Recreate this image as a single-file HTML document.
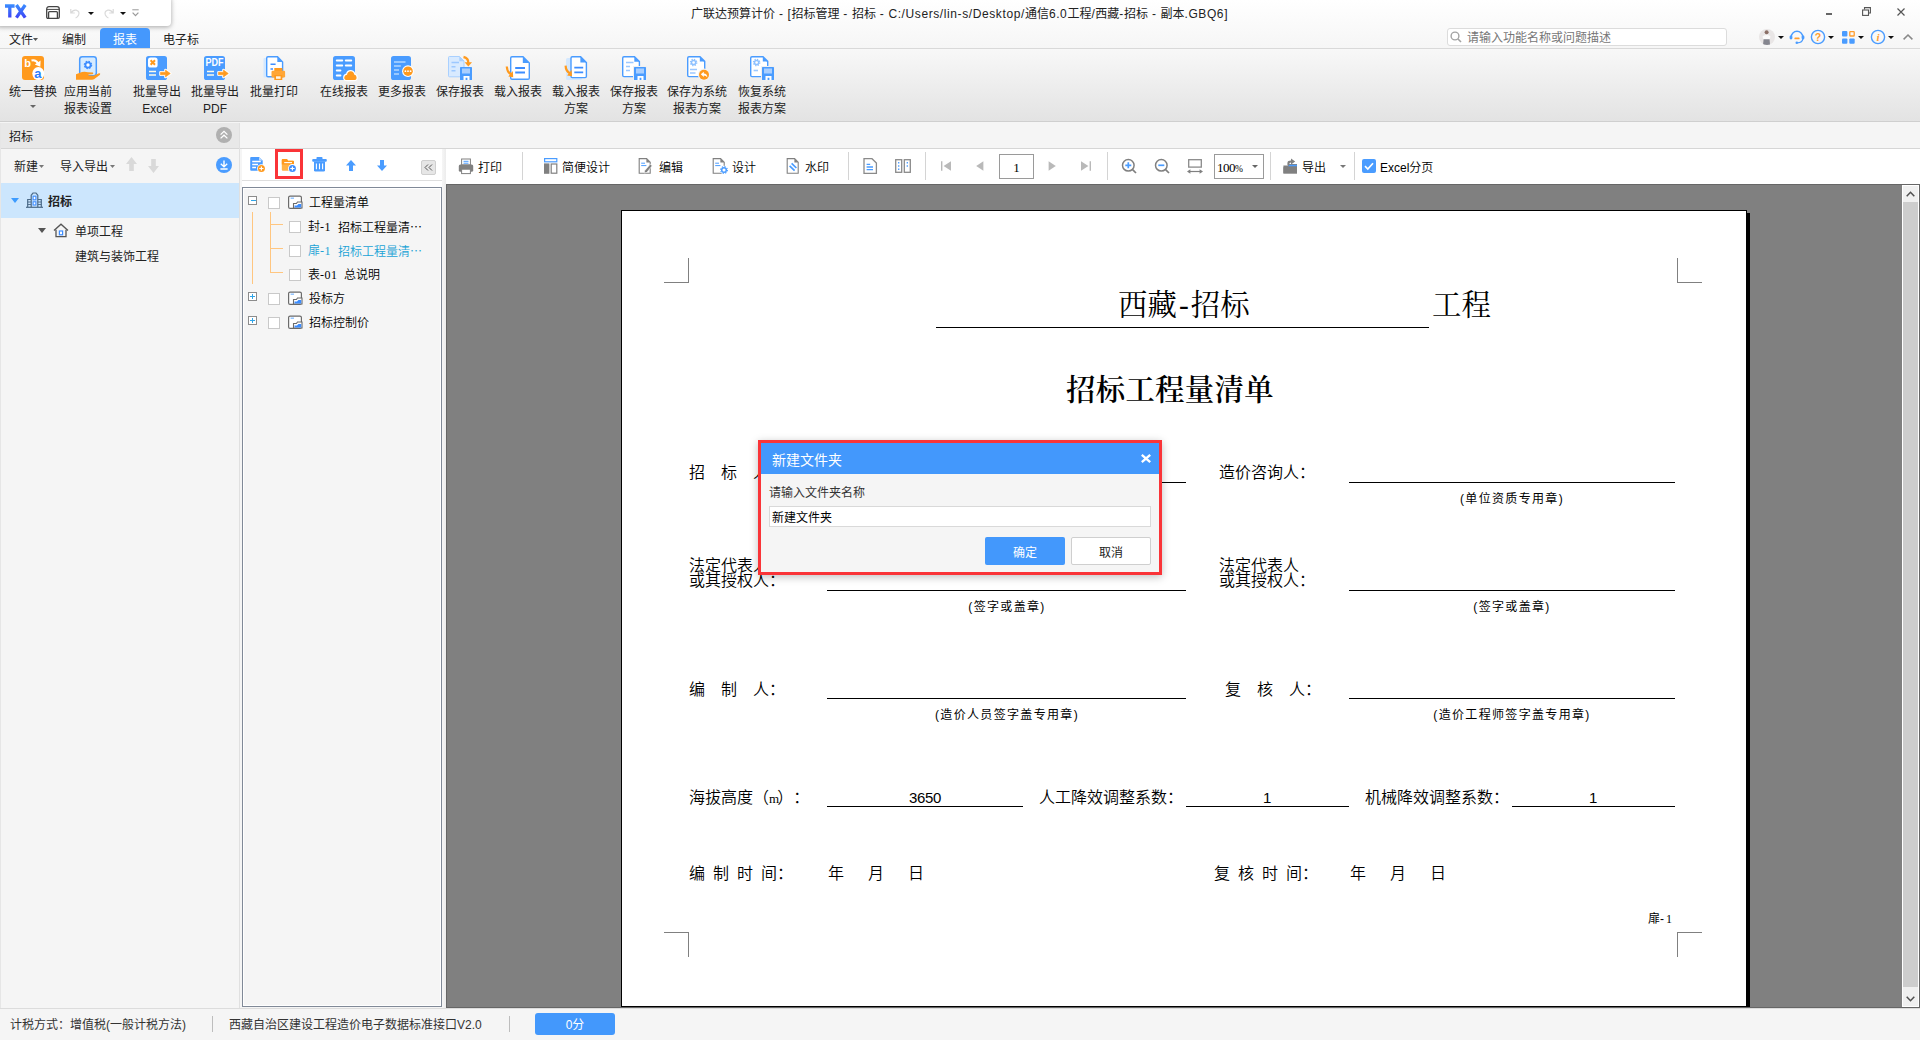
<!DOCTYPE html>
<html lang="zh-CN">
<head>
<meta charset="utf-8">
<title>广联达预算计价</title>
<style>
*{box-sizing:border-box;margin:0;padding:0}
html,body{width:1920px;height:1040px;overflow:hidden;background:#f5f5f5}
body{font-family:"Liberation Sans","Noto Sans CJK SC",sans-serif;font-size:12px;color:#222;position:relative}
.abs{position:absolute}
.t{position:absolute;white-space:nowrap;line-height:18px;height:18px}
svg{position:absolute;overflow:visible}
/* title */
#title{left:0;top:0;width:1920px;height:48px;background:linear-gradient(#ffffff,#f6f6f6)}
#qa{left:-4px;top:-4px;width:175px;height:30px;background:#fff;border-radius:4px;box-shadow:0 1px 5px rgba(0,0,0,.35)}
#tab{left:100px;top:28px;width:50px;height:21px;background:#4598fd;border-radius:4px 4px 0 0}
#ribbon{left:0;top:48px;width:1920px;height:74px;background:linear-gradient(#f8f8f8,#e3e3e3);border-top:1px solid #d9d9d9;border-bottom:1px solid #cfcfcf}
.rb{position:absolute;top:84px;text-align:center;line-height:17px;white-space:nowrap;transform:translateX(-50%)}
/* left panel */
#lhead{left:1px;top:123px;width:238px;height:26px;background:#e8e8e8;border-bottom:1px solid #d6d6d6}
#lpanel{left:0;top:123px;width:240px;height:885px;background:#f5f5f5;border-right:1px solid #e0e0e0;border-left:1px solid #e6e6e6}
#lsel{left:1px;top:183px;width:238px;height:35px;background:#cce6fd}
/* toolbars */
#tb2{left:242px;top:149px;width:200px;height:39px;background:#fff}
#tb3{left:446px;top:149px;width:1474px;height:36px;background:#fff}
#tree{left:242px;top:187px;width:200px;height:820px;background:#f5f5f5;border:1px solid #808997;box-shadow:inset 0 0 0 1px #fff}
#prev{left:446px;top:184px;width:1474px;height:824px;background:#808080;border:1px solid #666}
#page{left:621px;top:210px;width:1126px;height:797px;background:#fff;border:1px solid #000}
#pshadow{left:1747px;top:213px;width:3px;height:794px;background:#000}
#vscroll{left:1902px;top:185px;width:17px;height:822px;background:#cdcdcd;border:1px solid #fff}
#status{left:0;top:1008px;width:1920px;height:32px;background:#f5f5f5;border-top:1px solid #dcdcdc}
.ex{left:248px;width:9px;height:9px;border:1px solid #8c8c8c;background:#fff}
.ex i{position:absolute;background:#2fa4e7}
.cb{width:12px;height:12px;border:1px solid #c9c9c9;background:#fff}
.fi{left:288px}
.tr{color:#000;font-weight:350}
.tb{color:#000;font-weight:350}
.tr .a{font-family:"Liberation Serif",serif;letter-spacing:0.5px}
.l{letter-spacing:0.600px}
.sep{position:absolute;top:152px;width:1px;height:28px;background:#d4d4d4}
.cm{background:#808080}
.doc{position:absolute;white-space:pre;text-spacing-trim:space-all;font-kerning:none;font-family:"Liberation Serif","Noto Serif CJK SC",serif;color:#000}
.dt{font-size:29.400px;line-height:30px;height:30px}
.d16{font-family:"Liberation Serif","Noto Sans CJK SC",sans-serif;font-size:16px;line-height:16px;height:16px;font-weight:350;word-spacing:4px}
.d12{font-family:"Liberation Sans","Noto Sans CJK SC",sans-serif;font-weight:400;font-size:12px;line-height:12px;height:12px;text-align:center;letter-spacing:1.330px}
.dn{font-family:"Liberation Sans",sans-serif;font-size:15px;line-height:16px;text-align:center;letter-spacing:-0.400px}
.ln{position:absolute;height:1px;background:#000}
</style>
</head>
<body>
<div id="title" class="abs"></div>
<div id="qa" class="abs"></div>
<div id="tab" class="abs"></div>
<div id="ribbon" class="abs"></div>
<div id="lpanel" class="abs"></div>
<div id="lhead" class="abs"></div>
<div id="lsel" class="abs"></div>
<div class="abs" style="left:240px;top:148px;width:1680px;height:1px;background:#d6d6d6"></div>
<div class="abs" style="left:442px;top:149px;width:4px;height:859px;background:linear-gradient(90deg,#f6f6f6,#ececec)"></div>
<div id="tb2" class="abs"></div>
<div id="tb3" class="abs"></div>
<div id="tree" class="abs"></div>
<div id="prev" class="abs"></div>
<div id="page" class="abs"></div>
<div id="pshadow" class="abs"></div>
<div id="vscroll" class="abs"></div>
<div id="status" class="abs"></div>
<!--TITLEBAR-->
<!-- title bar -->
<svg style="left:5px;top:4px" width="22" height="14" viewBox="0 0 22 14"><defs><linearGradient id="gtx" x1="0" y1="0" x2="0" y2="1"><stop offset="0" stop-color="#3a8bff"/><stop offset="1" stop-color="#3d45f6"/></linearGradient></defs><path d="M0 2h9.600M4.800 1V13.600M11.400 1l8.800 12.600M20.200 1L11.400 13.600" stroke="url(#gtx)" stroke-width="3.3" fill="none" stroke-linecap="butt"/></svg>
<svg style="left:46px;top:6px" width="14" height="13" viewBox="0 0 14 13"><path d="M0.7 3.2Q0.7 0.7 3 0.7H11Q13.3 0.7 13.3 3.2V11Q13.3 12.3 12 12.3H2Q0.7 12.3 0.7 11Z" fill="none" stroke="#444" stroke-width="1.3"/><path d="M2.6 12V6.6Q2.6 5.6 3.6 5.6H10.4Q11.4 5.6 11.4 6.6V12" fill="none" stroke="#444" stroke-width="1.3"/><path d="M1 3.4H13" stroke="#444" stroke-width="1"/></svg>
<svg style="left:70px;top:8px" width="11" height="11" viewBox="0 0 11 11"><path d="M0.8 1v4h4M1.2 5Q3 1.4 6.4 2.2Q10 3.4 8.6 7Q7.6 9.2 5.6 10" fill="none" stroke="#d9d9d9" stroke-width="1.2"/></svg>
<svg style="left:88px;top:12px" width="6" height="3" viewBox="0 0 6 3"><path d="M0 0h6L3 3z" fill="#111"/></svg>
<svg style="left:103px;top:8px" width="11" height="11" viewBox="0 0 11 11"><path d="M10.2 1v4h-4M9.8 5Q8 1.4 4.600 2.200Q1 3.400 2.400 7Q3.400 9.200 5.400 10" fill="none" stroke="#d9d9d9" stroke-width="1.2"/></svg>
<svg style="left:120px;top:12px" width="6" height="3" viewBox="0 0 6 3"><path d="M0 0h6L3 3z" fill="#111"/></svg>
<svg style="left:132px;top:9px" width="7" height="8" viewBox="0 0 7 8"><path d="M0.3 0.8h6.400" stroke="#999" stroke-width="1"/><path d="M0.6 3.600L3.500 6.600L6.400 3.600" fill="none" stroke="#999" stroke-width="1.2"/></svg>
<div class="t" style="left:691px;top:5px;color:#222">广联达预算计价<span class="l"> - [</span>招标管理<span class="l"> - </span>招标<span class="l"> - C:/Users/lin-s/Desktop/</span>通信<span class="l">6.0</span>工程<span class="l">/</span>西藏<span class="l">-</span>招标<span class="l"> - </span>副本<span class="l">.GBQ6]</span></div>
<div class="abs" style="left:1826px;top:13px;width:6px;height:2px;background:#666"></div>
<svg style="left:1862px;top:7px" width="9" height="9" viewBox="0 0 9 9"><path d="M2.500 2.500V0.600H8.400V6H6.500" fill="none" stroke="#555" stroke-width="1.1"/><rect x="0.600" y="3" width="5.900" height="5.400" fill="none" stroke="#555" stroke-width="1.100"/></svg>
<svg style="left:1897px;top:8px" width="8" height="8" viewBox="0 0 8 8"><path d="M0.500 0.500L7.500 7.500M7.500 0.500L0.500 7.500" stroke="#555" stroke-width="1.200"/></svg>
<!-- menu -->
<div class="t" style="left:9px;top:31px">文件</div>
<svg style="left:33px;top:38px" width="5" height="3" viewBox="0 0 5 3"><path d="M0 0h5L2.500 3z" fill="#555"/></svg>
<div class="t" style="left:62px;top:31px">编制</div>
<div class="t" style="left:113px;top:31px;color:#fff">报表</div>
<div class="t" style="left:163px;top:31px">电子标</div>
<!-- search -->
<div class="abs" style="left:1447px;top:28px;width:280px;height:18px;background:#fff;border:1px solid #dcdcdc;border-radius:3px"></div>
<svg style="left:1450px;top:31px" width="12" height="12" viewBox="0 0 12 12"><circle cx="5" cy="5" r="3.900" fill="none" stroke="#a3a3a3" stroke-width="1.400"/><path d="M8 8L11 11" stroke="#a3a3a3" stroke-width="1.600"/></svg>
<div class="t" style="left:1467px;top:29px;color:#777">请输入功能名称或问题描述</div>
<!-- right icons -->
<svg style="left:1759px;top:29px" width="16" height="16" viewBox="0 0 16 16"><defs><clipPath id="cav"><circle cx="8" cy="8" r="8"/></clipPath></defs><circle cx="8" cy="8" r="8" fill="#e9e6e6"/><g clip-path="url(#cav)"><circle cx="7.600" cy="3.200" r="2" fill="#8b6f66"/><path d="M3.500 7.500Q7.600 4.600 11.500 7.500L10.500 10.500H4.500z" fill="#fbfbfb"/><path d="M4.600 10.200H10.600L11 16H4z" fill="#85868f"/></g></svg>
<svg style="left:1778px;top:36px" width="6" height="3" viewBox="0 0 6 3"><path d="M0 0h6L3 3z" fill="#111"/></svg>
<svg style="left:1789px;top:29px" width="16" height="16" viewBox="0 0 16 16"><path d="M2.200 8A5.800 5.800 0 0 1 13.800 8" fill="none" stroke="#4a9cff" stroke-width="1.400"/><rect x="0.600" y="6.400" width="2.800" height="4" rx="1.300" fill="#4a9cff"/><rect x="12.600" y="6.400" width="2.800" height="4" rx="1.300" fill="#4a9cff"/><path d="M13.800 10Q13.400 13.600 8.600 13.800" fill="none" stroke="#4a9cff" stroke-width="1.300"/><circle cx="7.800" cy="13.800" r="1.300" fill="#4a9cff"/><path d="M6.200 9.400H9.800" stroke="#ff9d2e" stroke-width="1.700" stroke-linecap="round"/></svg>
<svg style="left:1810px;top:29px" width="16" height="16" viewBox="0 0 16 16"><circle cx="8" cy="8" r="6.600" fill="none" stroke="#4a9cff" stroke-width="1.400"/><text x="8" y="12" font-family="Liberation Sans,sans-serif" font-weight="bold" font-size="10.500" fill="#ff9d2e" text-anchor="middle">?</text></svg>
<svg style="left:1828px;top:36px" width="6" height="3" viewBox="0 0 6 3"><path d="M0 0h6L3 3z" fill="#111"/></svg>
<svg style="left:1842px;top:31px" width="13" height="13" viewBox="0 0 13 13"><rect x="0" y="0" width="5.400" height="5.400" rx="1" fill="#4a9cff"/><rect x="7.800" y="0.600" width="4.400" height="4.400" rx="0.600" fill="none" stroke="#ff9d2e" stroke-width="1.300"/><rect x="0" y="7.400" width="5.400" height="5.400" rx="1" fill="#4a9cff"/><rect x="7.300" y="7.400" width="5.400" height="5.400" rx="1" fill="#4a9cff"/></svg>
<svg style="left:1858px;top:36px" width="6" height="3" viewBox="0 0 6 3"><path d="M0 0h6L3 3z" fill="#111"/></svg>
<svg style="left:1870px;top:29px" width="16" height="16" viewBox="0 0 16 16"><circle cx="8" cy="8" r="6.600" fill="none" stroke="#4a9cff" stroke-width="1.400"/><text x="8" y="12" font-family="Liberation Serif,serif" font-weight="bold" font-style="italic" font-size="11" fill="#ff9d2e" text-anchor="middle">i</text></svg>
<svg style="left:1888px;top:36px" width="6" height="3" viewBox="0 0 6 3"><path d="M0 0h6L3 3z" fill="#111"/></svg>
<svg style="left:1903px;top:34px" width="10" height="6" viewBox="0 0 10 6"><path d="M0.600 5.400L5 1L9.400 5.400" fill="none" stroke="#888" stroke-width="1.500"/></svg>
<!--/TITLEBAR-->
<!--RIBBON-->
<!-- ribbon icons -->
<svg style="left:17px;top:52px" width="32" height="32" viewBox="0 0 32 32"><rect x="5" y="4" width="22" height="24" rx="3" fill="#ff9a1e"/><text x="7.300" y="15" font-family="Liberation Sans,sans-serif" font-weight="bold" font-size="11" fill="#fff">b</text><path d="M14.500 8.500Q19 7.500 21 11.500" fill="none" stroke="#fff" stroke-width="2"/><path d="M17.800 12.400L23.600 8.600L23.300 14.800z" fill="#fff"/><ellipse cx="21.300" cy="21.600" rx="6" ry="6.500" fill="#fff"/><text x="17.300" y="26.300" font-family="Liberation Sans,sans-serif" font-weight="bold" font-size="13" fill="#2c7dff">a</text></svg>
<svg style="left:72px;top:52px" width="32" height="32" viewBox="0 0 32 32"><rect x="7.700" y="4.700" width="16.600" height="19" rx="2.600" fill="#d6ebff" stroke="#4a9cff" stroke-width="1.500"/><circle cx="16" cy="13" r="2.600" fill="#fff" stroke="#3d8dff" stroke-width="1.800"/><circle cx="16" cy="13" r="3.600" fill="none" stroke="#3d8dff" stroke-width="1.300" stroke-dasharray="1.500 1.330"/><path d="M4 22.300L10 20Q13 19.300 16 20.300L21 20.600Q21.800 22 20.500 22.300L16.500 22.500V23.400L21.500 23.700L27 21.300Q28.800 21.200 28 22.700L22 27.200Q20 28 17 27.800H4z" fill="#ff9a1e"/></svg>
<svg style="left:141px;top:52px" width="32" height="32" viewBox="0 0 32 32"><rect x="5" y="4" width="21" height="24" rx="2.600" fill="#4a9cff"/><rect x="7" y="5.500" width="9.600" height="10" rx="2.600" fill="#fff"/><path d="M9.600 8.300L14 12.700M14 8.300L9.600 12.700" stroke="#ff9a1e" stroke-width="2"/><path d="M8 19.500H15M8 23H15" stroke="#fffbe8" stroke-width="1.700"/><path d="M19.500 20.200H24.500V18L29.300 21.500L24.500 25V22.800H19.500z" fill="#ff9a1e" stroke="#fff" stroke-width="2.600" stroke-linejoin="round"/><path d="M19.500 20.200H24.500V18L29.300 21.500L24.500 25V22.800H19.500z" fill="#ff9a1e" stroke="#ff9a1e" stroke-width="0.600" stroke-linejoin="round"/></svg>
<svg style="left:199px;top:52px" width="32" height="32" viewBox="0 0 32 32"><rect x="5" y="4" width="21" height="24" rx="2.600" fill="#4a9cff"/><text x="6.400" y="14.300" font-family="Liberation Sans,sans-serif" font-weight="bold" font-size="10" fill="#fff" textLength="18" lengthAdjust="spacingAndGlyphs">PDF</text><path d="M8 19.500H15M8 23H15" stroke="#fffbe8" stroke-width="1.700"/><path d="M19.500 20.200H24.500V18L29.300 21.500L24.500 25V22.800H19.500z" fill="#ff9a1e" stroke="#fff" stroke-width="2.600" stroke-linejoin="round"/><path d="M19.500 20.200H24.500V18L29.300 21.500L24.500 25V22.800H19.500z" fill="#ff9a1e" stroke="#ff9a1e" stroke-width="0.600" stroke-linejoin="round"/></svg>
<svg style="left:258px;top:52px" width="32" height="32" viewBox="0 0 32 32"><rect x="5.500" y="6" width="4" height="19.500" rx="1" fill="#d3e8ff"/><path d="M10 4.700H19.500L24.600 10V24.800H10Q8.700 24.800 8.700 23.500V6Q8.700 4.700 10 4.700z" fill="#fff" stroke="#4a9cff" stroke-width="1.400"/><path d="M19.300 4.700V10H24.600z" fill="#4a9cff"/><path d="M12.500 12.300H17.600M12.500 17H15" stroke="#3d8dff" stroke-width="1.600"/><rect x="16.300" y="16" width="8" height="4" fill="#ff9a1e"/><rect x="13.500" y="18.800" width="13.600" height="6.600" rx="1.200" fill="#ffa636"/><rect x="16.300" y="23" width="8" height="5" fill="#ff9a1e"/><rect x="18" y="24.300" width="4.600" height="2.500" fill="#fff4e3"/></svg>
<svg style="left:328px;top:52px" width="32" height="32" viewBox="0 0 32 32"><rect x="5" y="4" width="22" height="24" rx="2.600" fill="#4a9cff"/><path d="M8.800 8.500H14.200M17.800 8.500H23.200M8.800 13.400H14.200M17.800 13.400H23.200M8.800 18.400H12.400M8.800 23.400H12.400" stroke="#fff" stroke-width="2" stroke-linecap="round"/><path d="M19 28Q16 28 16.300 25.200Q16.600 23 19 22.800Q19.600 19.300 22.800 19.300Q25.800 19.600 26.200 22.600Q28.600 23 28.600 25.400Q28.600 28 26 28z" fill="#ff9a1e" stroke="#fff" stroke-width="2.400"/><path d="M19 28Q16 28 16.300 25.200Q16.600 23 19 22.800Q19.600 19.300 22.800 19.300Q25.800 19.600 26.200 22.600Q28.600 23 28.600 25.400Q28.600 28 26 28z" fill="#ff9a1e"/></svg>
<svg style="left:386px;top:52px" width="32" height="32" viewBox="0 0 32 32"><rect x="5" y="4" width="20" height="24" rx="2.600" fill="#4a9cff"/><path d="M8 10H19.500M8 14H14.800M8 18H13M8 22H13" stroke="#b3d6ff" stroke-width="1.700"/><circle cx="22" cy="19.200" r="5.900" fill="#fff"/><circle cx="22" cy="19.200" r="4.800" fill="#ff9a1e"/><circle cx="19.400" cy="19.200" r="0.900" fill="#fff"/><circle cx="22" cy="19.200" r="0.900" fill="#fff"/><circle cx="24.600" cy="19.200" r="0.900" fill="#fff"/></svg>
<svg style="left:444px;top:52px" width="32" height="32" viewBox="0 0 32 32"><path d="M5.500 4.500H15.500L20 9V24.800H5.500Q4.500 24.800 4.500 23.800V5.500Q4.500 4.500 5.500 4.500z" fill="#d8eaff" stroke="#a9d0ff" stroke-width="1"/><path d="M15.300 4.500V9.200H20z" fill="#a9d0ff"/><path d="M7.500 10.500H15M7.500 14.800H11.500M7.500 18.800H11.500" stroke="#9cc8ff" stroke-width="1.500"/><path d="M19.500 5Q24.500 6 24.300 11" fill="none" stroke="#ff9a1e" stroke-width="2.300"/><path d="M20.600 10.300H28L24.300 14.400z" fill="#ff9a1e"/><rect x="16" y="15" width="12" height="13" rx="0.600" fill="#4a9cff"/><rect x="18" y="16.500" width="8" height="5" fill="#a9cfff"/><path d="M19.500 24H25.500V28H23.400V25.800H21.600V28H19.500z" fill="#fff"/></svg>
<svg style="left:502px;top:52px" width="32" height="32" viewBox="0 0 32 32"><path d="M10 4.700H21L27.300 11V26Q27.300 27.300 26 27.300H10Q8.700 27.300 8.700 26V6Q8.700 4.700 10 4.700z" fill="#fff" stroke="#4a9cff" stroke-width="1.400"/><path d="M20.800 4.700V11H27.300z" fill="#4a9cff"/><path d="M13.200 16H23M13.200 20.500H23" stroke="#3d8dff" stroke-width="1.800"/><path d="M4.800 14.500Q5 20 9 22.300" fill="none" stroke="#ff9a1e" stroke-width="2.200"/><path d="M6.300 24.600L10.800 19L11.200 25.200z" fill="#ff9a1e"/></svg>
<svg style="left:560px;top:52px" width="32" height="32" viewBox="0 0 32 32"><rect x="6" y="6" width="16" height="22" rx="1.600" fill="#d3e8ff"/><path d="M12.300 4.700H20.600L26.400 10.500V24.300Q26.400 25.600 25.100 25.600H12.300Q11 25.600 11 24.300V6Q11 4.700 12.300 4.700z" fill="#fff" stroke="#4a9cff" stroke-width="1.400"/><path d="M20.400 4.700V10.600H26.400z" fill="#4a9cff"/><path d="M14.300 15.600H23.200M14.300 20.400H23.200" stroke="#3d8dff" stroke-width="1.800"/><path d="M5.600 13.600Q5.800 19 9.800 21.300" fill="none" stroke="#ff9a1e" stroke-width="2.200"/><path d="M7.100 23.600L11.600 18L12 24.200z" fill="#ff9a1e"/></svg>
<svg style="left:618px;top:52px" width="32" height="32" viewBox="0 0 32 32"><path d="M6 4.700H16.500L21.400 9.600V23.300Q21.400 24.600 20.100 24.600H6Q4.700 24.600 4.700 23.300V6Q4.700 4.700 6 4.700z" fill="#fff" stroke="#4a9cff" stroke-width="1.400"/><path d="M16.300 4.700V9.800H21.400z" fill="#4a9cff"/><path d="M8 10.500H15.500M8 14.500H12M8 18.500H12" stroke="#9cc8ff" stroke-width="1.500"/><rect x="15" y="14" width="14" height="15" fill="#f0f0f0"/><rect x="16" y="15" width="12" height="13" rx="0.600" fill="#4a9cff"/><rect x="18" y="16.500" width="8" height="5" fill="#a9cfff"/><path d="M19.500 24H25.500V28H23.400V25.800H21.600V28H19.500z" fill="#fff"/></svg>
<svg style="left:681px;top:52px" width="32" height="32" viewBox="0 0 32 32"><path d="M8 4.700H19L23.700 9.400V23.300Q23.700 24.600 22.400 24.600H8Q6.700 24.600 6.700 23.300V6Q6.700 4.700 8 4.700z" fill="#fff" stroke="#4a9cff" stroke-width="1.400"/><path d="M18.800 4.700V9.600H23.700z" fill="#4a9cff"/><circle cx="12.600" cy="10.500" r="2.100" fill="none" stroke="#8ec1ff" stroke-width="1.500"/><circle cx="12.600" cy="10.500" r="3.200" fill="none" stroke="#8ec1ff" stroke-width="1.200" stroke-dasharray="1.300 1.210"/><path d="M9 17.500H16M9 21H14.500" stroke="#9cc8ff" stroke-width="1.500"/><circle cx="23" cy="22.700" r="6.100" fill="#f4f4f4"/><circle cx="23" cy="22.700" r="5" fill="#ff9a1e"/><path d="M19.800 22.300L22.800 19.700V21.400Q26.200 21.600 26.300 25.300Q25 23.400 22.800 23.400V25z" fill="#fff"/></svg>
<svg style="left:746px;top:52px" width="32" height="32" viewBox="0 0 32 32"><path d="M6 4.700H17L21.700 9.400V23.300Q21.700 24.600 20.400 24.600H6Q4.700 24.600 4.700 23.300V6Q4.700 4.700 6 4.700z" fill="#fff" stroke="#4a9cff" stroke-width="1.400"/><path d="M16.800 4.700V9.600H21.700z" fill="#4a9cff"/><circle cx="10.600" cy="10.500" r="2.100" fill="none" stroke="#8ec1ff" stroke-width="1.500"/><circle cx="10.600" cy="10.500" r="3.200" fill="none" stroke="#8ec1ff" stroke-width="1.200" stroke-dasharray="1.300 1.210"/><path d="M7.600 18.500H12" stroke="#9cc8ff" stroke-width="1.600"/><rect x="15" y="14" width="14" height="15" fill="#f0f0f0"/><rect x="16" y="15" width="12" height="13" rx="0.600" fill="#4a9cff"/><rect x="18" y="16.500" width="8" height="5" fill="#a9cfff"/><path d="M19.500 24H25.500V28H23.400V25.800H21.600V28H19.500z" fill="#fff"/></svg>
<!-- ribbon labels -->
<div class="rb" style="left:33px">统一替换</div>
<svg style="left:30px;top:105px" width="6" height="3" viewBox="0 0 6 3"><path d="M0 0h6L3 3z" fill="#666"/></svg>
<div class="rb" style="left:88px">应用当前<br>报表设置</div>
<div class="rb" style="left:157px">批量导出<br>Excel</div>
<div class="rb" style="left:215px">批量导出<br>PDF</div>
<div class="rb" style="left:274px">批量打印</div>
<div class="rb" style="left:344px">在线报表</div>
<div class="rb" style="left:402px">更多报表</div>
<div class="rb" style="left:460px">保存报表</div>
<div class="rb" style="left:518px">载入报表</div>
<div class="rb" style="left:576px">载入报表<br>方案</div>
<div class="rb" style="left:634px">保存报表<br>方案</div>
<div class="rb" style="left:697px">保存为系统<br>报表方案</div>
<div class="rb" style="left:762px">恢复系统<br>报表方案</div>
<!--/RIBBON-->
<!--LEFT-->
<!-- left panel -->
<div class="t" style="left:9px;top:128px">招标</div>
<svg style="left:216px;top:127px" width="16" height="16" viewBox="0 0 16 16"><circle cx="8" cy="8" r="8" fill="#b0b0b0"/><path d="M4.600 7.600L8 4.400L11.400 7.600M4.600 11.400L8 8.200L11.400 11.400" fill="none" stroke="#fff" stroke-width="1.300"/></svg>
<div class="t" style="left:14px;top:158px">新建</div>
<svg style="left:39px;top:165px" width="5" height="3" viewBox="0 0 5 3"><path d="M0 0h5L2.500 3z" fill="#777"/></svg>
<div class="t" style="left:60px;top:158px">导入导出</div>
<svg style="left:110px;top:165px" width="5" height="3" viewBox="0 0 5 3"><path d="M0 0h5L2.500 3z" fill="#777"/></svg>
<svg style="left:126px;top:157px" width="11" height="14" viewBox="0 0 11 14"><path d="M5.500 0L11 7H7.800V14H3.200V7H0z" fill="#d9d9d9"/></svg>
<svg style="left:148px;top:158.500px" width="11" height="14" viewBox="0 0 11 14"><path d="M5.500 14L11 7H7.800V0H3.200V7H0z" fill="#d9d9d9"/></svg>
<svg style="left:216px;top:157px" width="16" height="16" viewBox="0 0 16 16"><circle cx="8" cy="8" r="8" fill="#4a9cff"/><path d="M8 3.600V9.600M4.800 6.800L8 9.900L11.200 6.800M4.400 12H11.600" fill="none" stroke="#fff" stroke-width="1.400"/></svg>
<svg style="left:11px;top:198px" width="8" height="5" viewBox="0 0 8 5"><path d="M0 0h8L4 5z" fill="#3d9cff"/></svg>
<svg style="left:26px;top:192px" width="17" height="16" viewBox="0 0 17 16"><path d="M0 15.300H17" stroke="#4b6a88" stroke-width="1.200"/><path d="M5.200 15V3.200L7 1H10L11.800 3.200V15" fill="none" stroke="#4b6a88" stroke-width="1.200"/><path d="M1.700 15V7.500H5M15.300 15V7.500H12" fill="none" stroke="#4b6a88" stroke-width="1.200"/><path d="M1.700 10H5M1.700 12.500H5M12 10H15.300M12 12.500H15.300" stroke="#4b6a88" stroke-width="0.900"/><rect x="7.100" y="4.200" width="2.800" height="3.600" fill="#fff" stroke="#3d8dff" stroke-width="1.100"/><rect x="7.100" y="9.800" width="2.800" height="3.200" fill="#fff" stroke="#3d8dff" stroke-width="1.100"/></svg>
<div class="t" style="left:48px;top:193px;font-weight:bold">招标</div>
<svg style="left:38px;top:228px" width="8" height="5" viewBox="0 0 8 5"><path d="M0 0h8L4 5z" fill="#555"/></svg>
<svg style="left:53px;top:223px" width="16" height="15" viewBox="0 0 16 15"><path d="M1 7.600L8 1.200L15 7.600" fill="none" stroke="#555" stroke-width="1.300"/><path d="M3 6.800V13.600H13V6.800" fill="none" stroke="#555" stroke-width="1.300"/><rect x="6.400" y="8" width="3.200" height="3.800" fill="#fff" stroke="#3d8dff" stroke-width="1.200"/></svg>
<div class="t" style="left:75px;top:223px">单项工程</div>
<div class="t" style="left:75px;top:248px">建筑与装饰工程</div>
<!--/LEFT-->
<!--MID-->
<!-- middle toolbar -->
<svg style="left:249px;top:156px" width="18" height="17" viewBox="0 0 18 17"><path d="M2.200 1H10L13.700 4.600V13.800Q13.700 14.800 12.700 14.800H2.200Q1.200 14.800 1.200 13.800V2Q1.200 1 2.200 1z" fill="#4a9cff"/><path d="M10 1V4.600H13.700z" fill="#b9d9ff"/><path d="M3.200 5.500H11.800M3.200 8.500H9M3.200 11.500H7" stroke="#fff" stroke-width="1.300"/><circle cx="12.400" cy="12.500" r="4.300" fill="#fff"/><circle cx="12.400" cy="12.500" r="3.500" fill="#ff9a1e"/><path d="M10.300 12.500H14.500M12.400 10.400V14.600" stroke="#fff" stroke-width="1.200"/></svg>
<div class="abs" style="left:275px;top:149px;width:28px;height:30px;border:3px solid #fa3438"></div>
<svg style="left:281px;top:158px" width="16" height="15" viewBox="0 0 16 15"><path d="M1.800 1H6L7 2.800H12Q13 2.800 13 3.800V11.800Q13 12.800 12 12.800H1.800Q0.800 12.800 0.800 11.800V2Q0.800 1 1.800 1z" fill="#ffb247"/><path d="M1.800 1H6L7 2.800H12Q13 2.800 13 3.800V6.400H0.800V2Q0.800 1 1.800 1z" fill="#ff9a1e"/><path d="M3.200 4.600H11" stroke="#fff" stroke-width="1.100"/><circle cx="11.400" cy="10.500" r="4.400" fill="#fff"/><circle cx="11.400" cy="10.500" r="3.500" fill="#3d8dff"/><path d="M9.300 10.500H13.500M11.400 8.400V12.600" stroke="#fff" stroke-width="1.200"/></svg>
<svg style="left:312px;top:157px" width="15" height="15" viewBox="0 0 15 15"><rect x="0.200" y="2" width="14.600" height="2.700" rx="1" fill="#4a9cff"/><rect x="4.500" y="0" width="6" height="3" rx="0.800" fill="#4a9cff"/><path d="M2 4.600H13V13.200Q13 14.600 11.600 14.600H3.400Q2 14.600 2 13.200z" fill="#4a9cff"/><path d="M4.400 6.400V12.200M7.500 6.400V12.200M10.600 6.400V12.200" stroke="#fff" stroke-width="1.100"/></svg>
<svg style="left:346px;top:160px" width="10" height="11" viewBox="0 0 10 11"><path d="M5 0L10 5.600H7V11H3V5.600H0z" fill="#4a9cff"/></svg>
<svg style="left:377px;top:160px" width="10" height="11" viewBox="0 0 10 11"><path d="M5 11L10 5.400H7V0H3V5.400H0z" fill="#4a9cff"/></svg>
<div class="abs" style="left:421px;top:160px;width:15px;height:15px;background:#e6e6e6;border:1px solid #cfcfcf;border-radius:2px"></div>
<svg style="left:424px;top:164px" width="9" height="7" viewBox="0 0 9 7"><path d="M4 0.500L1 3.500L4 6.500M8 0.500L5 3.500L8 6.500" fill="none" stroke="#555" stroke-width="1"/></svg>
<div class="abs" style="left:242px;top:180px;width:200px;height:1px;background:#dedede"></div>
<!-- tree -->
<div class="abs" style="left:252px;top:212px;width:1px;height:72px;background:#ffc680"></div>
<div class="abs" style="left:270px;top:212px;width:1px;height:61px;background:#ffc680"></div>
<div class="abs" style="left:270px;top:224px;width:13px;height:1px;background:#ffc680"></div>
<div class="abs" style="left:270px;top:248px;width:13px;height:1px;background:#ffc680"></div>
<div class="abs" style="left:270px;top:272px;width:13px;height:1px;background:#ffc680"></div>
<div class="abs ex" style="top:196px"><i style="left:2px;top:3px;width:5px;height:1px"></i></div>
<div class="abs ex" style="top:292px"><i style="left:1px;top:3px;width:5px;height:1px"></i><i style="left:3px;top:1px;width:1px;height:5px"></i></div>
<div class="abs ex" style="top:316px"><i style="left:1px;top:3px;width:5px;height:1px"></i><i style="left:3px;top:1px;width:1px;height:5px"></i></div>
<div class="abs cb" style="left:268px;top:197px"></div>
<div class="abs cb" style="left:289px;top:221px"></div>
<div class="abs cb" style="left:289px;top:245px"></div>
<div class="abs cb" style="left:289px;top:269px"></div>
<div class="abs cb" style="left:268px;top:293px"></div>
<div class="abs cb" style="left:268px;top:317px"></div>
<svg class="fi" style="top:195px" width="15" height="14" viewBox="0 0 15 14"><rect x="0.600" y="1.100" width="12.800" height="12.300" rx="1.500" fill="#fff" stroke="#6b6b6b" stroke-width="1.200"/><path d="M2.600 3.200H6" stroke="#8cc0ff" stroke-width="1.400"/><path d="M5.500 13V8.500H8.400L9.500 7H14V13z" fill="#fff" stroke="#6b6b6b" stroke-width="1.100"/><path d="M6.500 12.600V10.600H9L10.400 9H13.200V12.600z" fill="#3d8dff"/></svg>
<svg class="fi" style="top:291px" width="15" height="14" viewBox="0 0 15 14"><rect x="0.600" y="1.100" width="12.800" height="12.300" rx="1.500" fill="#fff" stroke="#6b6b6b" stroke-width="1.200"/><path d="M2.600 3.200H6" stroke="#8cc0ff" stroke-width="1.400"/><path d="M5.500 13V8.500H8.400L9.500 7H14V13z" fill="#fff" stroke="#6b6b6b" stroke-width="1.100"/><path d="M6.500 12.600V10.600H9L10.400 9H13.200V12.600z" fill="#3d8dff"/></svg>
<svg class="fi" style="top:315px" width="15" height="14" viewBox="0 0 15 14"><rect x="0.600" y="1.100" width="12.800" height="12.300" rx="1.500" fill="#fff" stroke="#6b6b6b" stroke-width="1.200"/><path d="M2.600 3.200H6" stroke="#8cc0ff" stroke-width="1.400"/><path d="M5.500 13V8.500H8.400L9.500 7H14V13z" fill="#fff" stroke="#6b6b6b" stroke-width="1.100"/><path d="M6.500 12.600V10.600H9L10.400 9H13.200V12.600z" fill="#3d8dff"/></svg>

<div class="t tr" style="left:309px;top:194px">工程量清单</div>
<div class="t tr" style="left:308px;top:218px">封<span class="a">-1</span></div><div class="t tr" style="left:338px;top:218px">招标工程量清<span style="font-family:'Noto Sans CJK SC',sans-serif">…</span></div>
<div class="t tr" style="left:308px;top:242px;color:#1ba3d6">扉<span class="a">-1</span></div><div class="t tr" style="left:338px;top:242px;color:#1ba3d6">招标工程量清<span style="font-family:'Noto Sans CJK SC',sans-serif">…</span></div>
<div class="t tr" style="left:308px;top:266px">表<span class="a">-01</span></div><div class="t tr" style="left:344px;top:266px">总说明</div>
<div class="t tr" style="left:309px;top:290px">投标方</div>
<div class="t tr" style="left:309px;top:314px">招标控制价</div>
<!--/MID-->
<!--TOOLBAR-->
<!-- preview toolbar -->
<svg style="left:458px;top:157.500px" width="16" height="17" viewBox="0 0 16 17"><rect x="3.600" y="1" width="8.800" height="6" fill="#fff" stroke="#808080" stroke-width="1"/><path d="M5.500 3.300H10.500M5.500 5.200H10.500" stroke="#4a9cff" stroke-width="1"/><rect x="0.800" y="6.400" width="14.400" height="7.400" rx="1.600" fill="#808080"/><rect x="3.600" y="11.200" width="8.800" height="4.400" fill="#fff" stroke="#808080" stroke-width="1"/></svg>
<div class="t tb" style="left:478px;top:159px">打印</div>
<div class="sep" style="left:522px"></div>
<svg style="left:544px;top:158px" width="14" height="16" viewBox="0 0 14 16"><rect x="0.600" y="0.600" width="12.200" height="3.200" fill="#fff" stroke="#4a9cff" stroke-width="1.200"/><rect x="0" y="5.400" width="5.400" height="10.400" fill="#808080"/><rect x="7.200" y="6" width="5.600" height="9.200" fill="#fff" stroke="#808080" stroke-width="1.200"/></svg>
<div class="t tb" style="left:562px;top:159px">简便设计</div>
<svg style="left:638px;top:158px" width="16" height="16" viewBox="0 0 16 16"><path d="M1.200 0.600H8.600L12.200 4.200V15.200H1.200z" fill="#fff" stroke="#808080" stroke-width="1.100"/><path d="M8.400 0.600V4.400H12.200z" fill="#808080"/><path d="M3.200 5.200H7M3.200 7.600H8.400" stroke="#4a9cff" stroke-width="1"/><path d="M6.600 12.800L12.200 6.200L14.200 7.800L8.800 14.400L6.200 15z" fill="#808080" stroke="#fff" stroke-width="0.600"/></svg>
<div class="t tb" style="left:659px;top:159px">编辑</div>
<svg style="left:712px;top:158px" width="17" height="16" viewBox="0 0 17 16"><path d="M1.200 0.600H8.600L12.200 4.200V15.200H1.200z" fill="#fff" stroke="#808080" stroke-width="1.100"/><path d="M8.400 0.600V4.400H12.200z" fill="#808080"/><path d="M3.200 5.200H7M3.200 7.600H8.400" stroke="#4a9cff" stroke-width="1"/><circle cx="12" cy="12" r="4.300" fill="#fff"/><circle cx="12" cy="12" r="2.300" fill="#fff" stroke="#4a9cff" stroke-width="1.500"/><circle cx="12" cy="12" r="3.400" fill="none" stroke="#4a9cff" stroke-width="1.100" stroke-dasharray="1.300 1.370"/></svg>
<div class="t tb" style="left:732px;top:159px">设计</div>
<svg style="left:786px;top:158px" width="14" height="16" viewBox="0 0 14 16"><path d="M1.200 0.600H8.600L12.200 4.200V15.200H1.200z" fill="#fff" stroke="#808080" stroke-width="1.100"/><path d="M8.400 0.600V4.400H12.200z" fill="#808080"/><path d="M3.600 7.800L8.600 12.600M5.600 5.400L10.400 10" stroke="#4a9cff" stroke-width="1.700"/></svg>
<div class="t tb" style="left:805px;top:159px">水印</div>
<div class="sep" style="left:848px"></div>
<svg style="left:863px;top:158px" width="15" height="16" viewBox="0 0 15 16"><path d="M1 0.700H9L13.400 5V15.300H1z" fill="#fff" stroke="#8a8a8a" stroke-width="1.300"/><path d="M3.600 6.400H7.200M3.600 9H10M3.600 11.600H10" stroke="#4a9cff" stroke-width="1.300"/></svg>
<svg style="left:895px;top:159px" width="16" height="14" viewBox="0 0 16 14"><rect x="0.700" y="0.700" width="6" height="12.600" fill="#fff" stroke="#8a8a8a" stroke-width="1.300"/><rect x="9.300" y="0.700" width="6" height="12.600" fill="#fff" stroke="#8a8a8a" stroke-width="1.300"/><path d="M3.700 3V4.600M3.700 6.200V7.800M3.700 9.400V11M12.300 3V4.600M12.300 6.200V7.800" stroke="#4a9cff" stroke-width="1.300"/></svg>
<div class="sep" style="left:925px"></div>
<svg style="left:941px;top:161px" width="11" height="10" viewBox="0 0 11 10"><path d="M0 0.300H1.400V9.700H0zM10 0.300V9.700L2.600 5z" fill="#b9b9b9"/></svg>
<svg style="left:976px;top:161px" width="8" height="10" viewBox="0 0 8 10"><path d="M7.400 0.300V9.700L0.200 5z" fill="#b9b9b9"/></svg>
<div class="abs" style="left:999px;top:154px;width:35px;height:25px;background:#fff;border:1px solid #9a9a9a"></div>
<div class="t" style="left:999px;top:159px;width:35px;text-align:center;color:#000;font-family:'Liberation Serif',serif;font-size:13px">1</div>
<svg style="left:1048px;top:161px" width="8" height="10" viewBox="0 0 8 10"><path d="M0.600 0.300V9.700L7.800 5z" fill="#b9b9b9"/></svg>
<svg style="left:1080px;top:161px" width="11" height="10" viewBox="0 0 11 10"><path d="M9.600 0.300H11V9.700H9.600zM1 0.300V9.700L8.400 5z" fill="#b9b9b9"/></svg>
<div class="sep" style="left:1107px"></div>
<svg style="left:1121px;top:158px" width="16" height="16" viewBox="0 0 16 16"><circle cx="7.300" cy="7.300" r="5.800" fill="#fff" stroke="#808080" stroke-width="1.500"/><path d="M11.600 11.600L15 15" stroke="#808080" stroke-width="1.700"/><path d="M4.300 7.300H10.300M7.300 4.300V10.300" stroke="#4a9cff" stroke-width="1.700"/></svg>
<svg style="left:1154px;top:158px" width="16" height="16" viewBox="0 0 16 16"><circle cx="7.300" cy="7.300" r="5.800" fill="#fff" stroke="#808080" stroke-width="1.500"/><path d="M11.600 11.600L15 15" stroke="#808080" stroke-width="1.700"/><path d="M4.300 7.300H10.300" stroke="#4a9cff" stroke-width="1.700"/></svg>
<svg style="left:1187px;top:159px" width="16" height="15" viewBox="0 0 16 15"><rect x="1.700" y="0.700" width="12.600" height="7.400" fill="#fff" stroke="#8a8a8a" stroke-width="1.300"/><path d="M1.500 12.500H14.500" stroke="#808080" stroke-width="1.200"/><path d="M0 12.500L3.400 10.300V14.700zM16 12.500L12.600 10.300V14.700z" fill="#808080"/></svg>
<div class="abs" style="left:1214px;top:154px;width:50px;height:25px;background:#fff;border:1px solid #9a9a9a"></div>
<div class="t" style="left:1217px;top:159px;color:#000;font-family:'Liberation Serif',serif;font-size:13px;letter-spacing:-0.500px">100<span style="font-size:9.500px;letter-spacing:0">%</span></div>
<svg style="left:1252px;top:165px" width="6" height="3" viewBox="0 0 6 3"><path d="M0 0h6L3 3z" fill="#666"/></svg>
<div class="sep" style="left:1270px"></div>
<svg style="left:1283px;top:158px" width="15" height="16" viewBox="0 0 15 16"><path d="M4.400 7V5Q4.600 2.600 8 2.600V0.600L12.200 3.600L8 6.600V4.600Q6.200 4.600 6.200 7z" fill="#808080"/><path d="M0.400 7.400H4.600L5.800 6H14V15.400H0.400z" fill="#808080"/><path d="M5 8.200L6.400 6.800H14V8.200z" fill="#4a9cff"/><path d="M0.400 9.200H14V15.400H0.400z" fill="#808080"/></svg>
<div class="t tb" style="left:1302px;top:159px">导出</div>
<svg style="left:1340px;top:165px" width="6" height="3" viewBox="0 0 6 3"><path d="M0 0h6L3 3z" fill="#777"/></svg>
<div class="sep" style="left:1354px"></div>
<div class="abs" style="left:1362px;top:159px;width:14px;height:14px;background:#4a9cff;border-radius:2px"></div>
<svg style="left:1362px;top:159px" width="14" height="14" viewBox="0 0 14 14"><path d="M3 7.200L5.800 10L11 4.200" fill="none" stroke="#fff" stroke-width="1.700"/></svg>
<div class="t tb" style="left:1380px;top:159px">Excel分页</div>
<!-- scrollbar -->
<div class="abs" style="left:1903px;top:186px;width:15px;height:16px;background:#f0f0f0"></div>
<div class="abs" style="left:1903px;top:987px;width:15px;height:19px;background:#f0f0f0"></div>
<svg style="left:1906px;top:191px" width="9" height="6" viewBox="0 0 9 6"><path d="M0.700 5.300L4.500 1.300L8.300 5.300" fill="none" stroke="#505050" stroke-width="1.500"/></svg>
<svg style="left:1906px;top:996px" width="9" height="6" viewBox="0 0 9 6"><path d="M0.700 0.700L4.500 4.700L8.300 0.700" fill="none" stroke="#505050" stroke-width="1.500"/></svg>
<!--/TOOLBAR-->
<!--DOC-->
<!-- document -->
<div class="abs cm" style="left:664px;top:282px;width:25px;height:1px"></div><div class="abs cm" style="left:688px;top:258px;width:1px;height:25px"></div>
<div class="abs cm" style="left:1677px;top:282px;width:25px;height:1px"></div><div class="abs cm" style="left:1677px;top:258px;width:1px;height:25px"></div>
<div class="abs cm" style="left:664px;top:932px;width:25px;height:1px"></div><div class="abs cm" style="left:688px;top:932px;width:1px;height:25px"></div>
<div class="abs cm" style="left:1677px;top:932px;width:25px;height:1px"></div><div class="abs cm" style="left:1677px;top:932px;width:1px;height:25px"></div>
<div class="doc dt" style="left:1118px;top:290px">西藏<span style="display:inline-block;width:14px;text-align:center">-</span>招标</div>
<div class="ln" style="left:936px;top:327px;width:493px"></div>
<div class="doc dt" style="left:1432px;top:290px">工程</div>
<div class="doc dt" style="left:1066px;top:375px;font-weight:600;letter-spacing:0.300px">招标工程量清单</div>
<div class="doc d16" style="left:689px;top:465px">招  标  人：</div>
<div class="ln" style="left:827px;top:482px;width:359px"></div>
<div class="doc d16" style="left:1219px;top:465px">造价咨询人：</div>
<div class="ln" style="left:1349px;top:482px;width:326px"></div>
<div class="doc d12" style="left:1412px;top:493px;width:200px">(单位资质专用章)</div>
<div class="doc d16" style="left:689px;top:558px">法定代表人</div>
<div class="doc d16" style="left:689px;top:573px">或其授权人：</div>
<div class="ln" style="left:827px;top:590px;width:359px"></div>
<div class="doc d12" style="left:907px;top:601px;width:200px">(签字或盖章)</div>
<div class="doc d16" style="left:1219px;top:558px">法定代表人</div>
<div class="doc d16" style="left:1219px;top:573px">或其授权人：</div>
<div class="ln" style="left:1349px;top:590px;width:326px"></div>
<div class="doc d12" style="left:1412px;top:601px;width:200px">(签字或盖章)</div>
<div class="doc d16" style="left:689px;top:682px">编  制  人：</div>
<div class="ln" style="left:827px;top:698px;width:359px"></div>
<div class="doc d12" style="left:907px;top:709px;width:200px">(造价人员签字盖专用章)</div>
<div class="doc d16" style="left:1225px;top:682px">复  核  人：</div>
<div class="ln" style="left:1349px;top:698px;width:326px"></div>
<div class="doc d12" style="left:1412px;top:709px;width:200px">(造价工程师签字盖专用章)</div>
<div class="doc d16" style="left:689px;top:790px">海拔高度（<span style="font-size:13px;letter-spacing:-2px">m</span>）：</div>
<div class="ln" style="left:827px;top:806px;width:196px"></div>
<div class="doc dn" style="left:875px;top:790px;width:100px">3650</div>
<div class="doc d16" style="left:1039px;top:790px">人工降效调整系数：</div>
<div class="ln" style="left:1186px;top:806px;width:163px"></div>
<div class="doc dn" style="left:1217px;top:790px;width:100px">1</div>
<div class="doc d16" style="left:1365px;top:790px">机械降效调整系数：</div>
<div class="ln" style="left:1512px;top:806px;width:163px"></div>
<div class="doc dn" style="left:1543px;top:790px;width:100px">1</div>
<div class="doc d16" style="left:689px;top:866px">编 制 时 间：</div>
<div class="doc d16" style="left:828px;top:866px">年   月   日</div>
<div class="doc d16" style="left:1214px;top:866px">复 核 时 间：</div>
<div class="doc d16" style="left:1350px;top:866px">年   月   日</div>
<div class="doc d12" style="left:1648px;top:913px;letter-spacing:0">扉<span style="letter-spacing:2px">-</span><span style="font-family:'Liberation Serif',serif">1</span></div>
<!--/DOC-->
<!--DIALOG-->
<!-- dialog -->
<div class="abs" style="left:758px;top:440px;width:404px;height:135px;background:#f5f5f5;border:3px solid #fa3438;box-shadow:0 2px 8px rgba(0,0,0,.25)"></div>
<div class="abs" style="left:761px;top:443px;width:398px;height:31px;background:#4398fc"></div>
<div class="t" style="left:772px;top:451px;color:#fff;font-size:14px">新建文件夹</div>
<svg style="left:1141px;top:454px" width="10" height="9" viewBox="0 0 10 9"><path d="M0.800 0.800L9.200 8.200M9.200 0.800L0.800 8.200" stroke="#fff" stroke-width="2.300"/></svg>
<div class="t" style="left:769px;top:484px;color:#333">请输入文件夹名称</div>
<div class="abs" style="left:769px;top:506px;width:382px;height:21px;background:#fff;border:1px solid #d9d9d9"></div>
<div class="t" style="left:772px;top:508.5px;color:#000">新建文件夹</div>
<div class="abs" style="left:985px;top:537px;width:80px;height:28px;background:#4398fc;border-radius:2px"></div>
<div class="t" style="left:985px;top:543.5px;width:80px;text-align:center;color:#fff">确定</div>
<div class="abs" style="left:1071px;top:537px;width:80px;height:28px;background:#fff;border:1px solid #cfcfcf;border-radius:2px"></div>
<div class="t" style="left:1071px;top:543.5px;width:80px;text-align:center;color:#222">取消</div>
<!--/DIALOG-->
<!--STATUS-->
<!-- status -->
<div class="t" style="left:10px;top:1016px;color:#333">计税方式：增值税(一般计税方法)</div>
<div class="abs" style="left:212px;top:1016px;width:1px;height:16px;background:#bdbdbd"></div>
<div class="t" style="left:229px;top:1016px;color:#333">西藏自治区建设工程造价电子数据标准接口V2.0</div>
<div class="abs" style="left:509px;top:1016px;width:1px;height:16px;background:#bdbdbd"></div>
<div class="abs" style="left:535px;top:1013px;width:80px;height:22px;background:#4398fc;border-radius:3px"></div>
<div class="t" style="left:535px;top:1016px;width:80px;text-align:center;color:#fff">0分</div>
<!--/STATUS-->
</body>
</html>
